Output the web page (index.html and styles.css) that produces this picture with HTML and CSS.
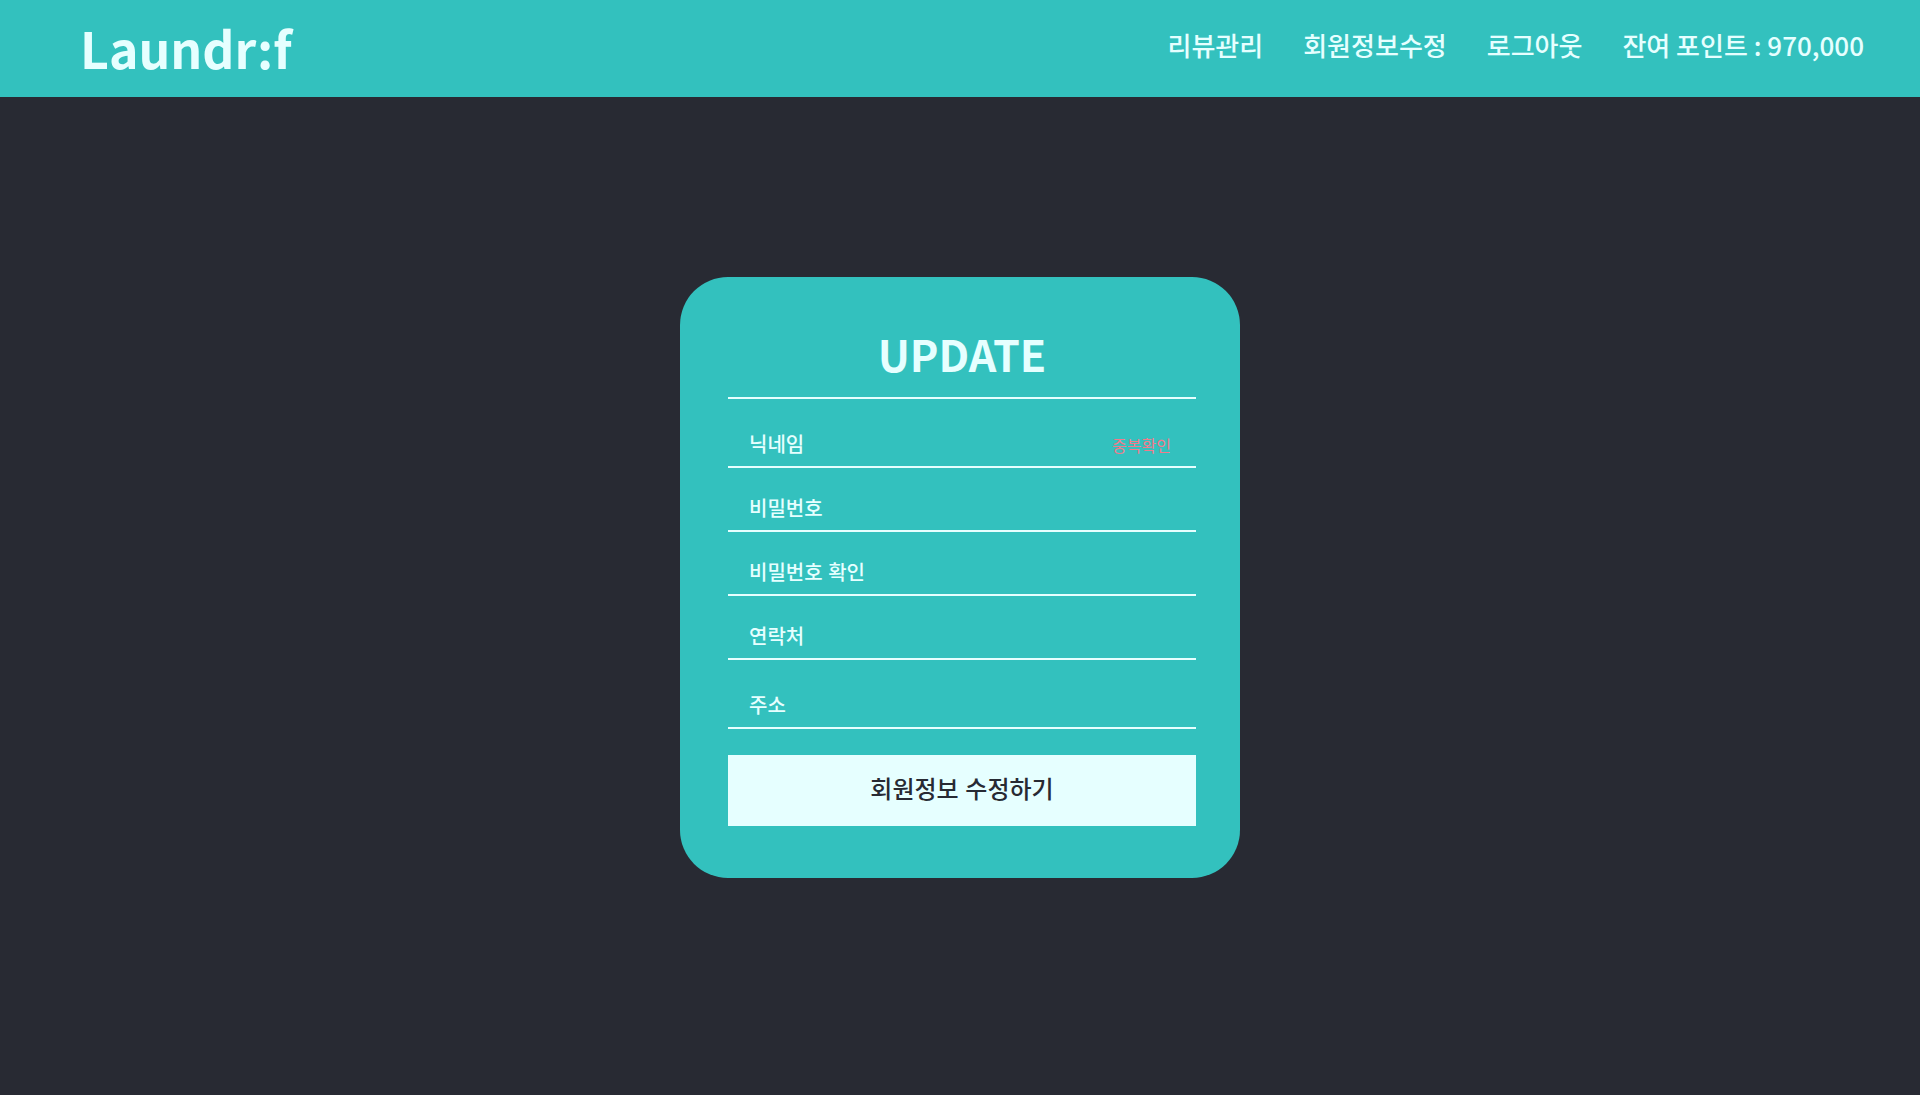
FILE: index.html
```html
<!DOCTYPE html>
<html lang="ko">
<head>
<meta charset="utf-8">
<title>Laundr:f</title>
<link rel="stylesheet" href="styles.css">
</head>
<body>
<header class="header">
  <a class="logo" href="#">Laundr:f</a>
  <nav class="nav">
    <a href="#">리뷰관리</a>
    <a href="#">회원정보수정</a>
    <a href="#">로그아웃</a>
    <span>잔여 포인트 : 970,000</span>
  </nav>
</header>
<main class="main">
  <form class="card">
    <h1 class="title">UPDATE</h1>
    <div class="field field-tall">
      <input type="text" placeholder="닉네임" aria-label="닉네임">
      <button class="check" type="button">중복확인</button>
    </div>
    <div class="field"><input type="password" placeholder="비밀번호" aria-label="비밀번호"></div>
    <div class="field"><input type="password" placeholder="비밀번호 확인" aria-label="비밀번호 확인"></div>
    <div class="field"><input type="tel" placeholder="연락처" aria-label="연락처"></div>
    <div class="field field-tall"><input type="text" placeholder="주소" aria-label="주소"></div>
    <button class="submit" type="submit">회원정보 수정하기</button>
  </form>
</main>
</body>
</html>
```

FILE: styles.css
```css
* {
  box-sizing: border-box;
}

body {
  display: flex;
  flex-direction: column;
  min-height: 100vh;
  margin: 0;
  background: #282a33;
  color: #e6ffff;
  font-family: "Noto Sans CJK KR", sans-serif;
}

.header {
  display: flex;
  align-items: center;
  justify-content: space-between;
  height: 97px;
  padding: 0 56px 4px 80px;
  background: #33c1be;
  /* keep the colon on the baseline */
  font-feature-settings: "locl" 0;
}

.header a {
  color: inherit;
  text-decoration: none;
}

.header .logo {
  font-size: 50px;
  font-weight: 700;
  line-height: 72px;
}

.nav {
  display: flex;
  gap: 40px;
  padding-bottom: 4px;
  font-size: 26px;
  font-weight: 500;
  line-height: 40px;
}

.main {
  display: flex;
  flex: 1;
  align-items: flex-start;
  justify-content: center;
  padding: 180px 20px 40px;
}

.card {
  width: 560px;
  padding: 44px 44px 52px 48px;
  border-radius: 48px;
  background: #33c1be;
}

.title {
  margin: 0;
  padding-bottom: 12px;
  border-bottom: 2px solid #e6ffff;
  font-size: 43px;
  font-weight: 700;
  line-height: 64px;
  text-align: center;
}

.field {
  display: flex;
  align-items: flex-end;
  height: 64px;
  border-bottom: 2px solid #e6ffff;
}

.field-tall {
  height: 69px;
}

.field input {
  flex: 1;
  min-width: 0;
  height: 45px;
  padding: 0 22px 0 21px;
  border: 0;
  outline: 0;
  background: transparent;
  color: inherit;
  font: 500 20px/44px "Noto Sans CJK KR", sans-serif;
}

.field input::placeholder {
  color: #e6ffff;
  opacity: 1;
}

.check {
  height: 42px;
  padding: 0 25px;
  border: 0;
  background: transparent;
  color: #f07c8c;
  font: 400 16px/40px "Noto Sans CJK KR", sans-serif;
}

.submit {
  display: block;
  width: 100%;
  height: 71px;
  margin-top: 26px;
  padding: 0 0 6px;
  border: 0;
  background: #e6ffff;
  color: #282a33;
  font: 500 24px/36px "Noto Sans CJK KR", sans-serif;
}
```
